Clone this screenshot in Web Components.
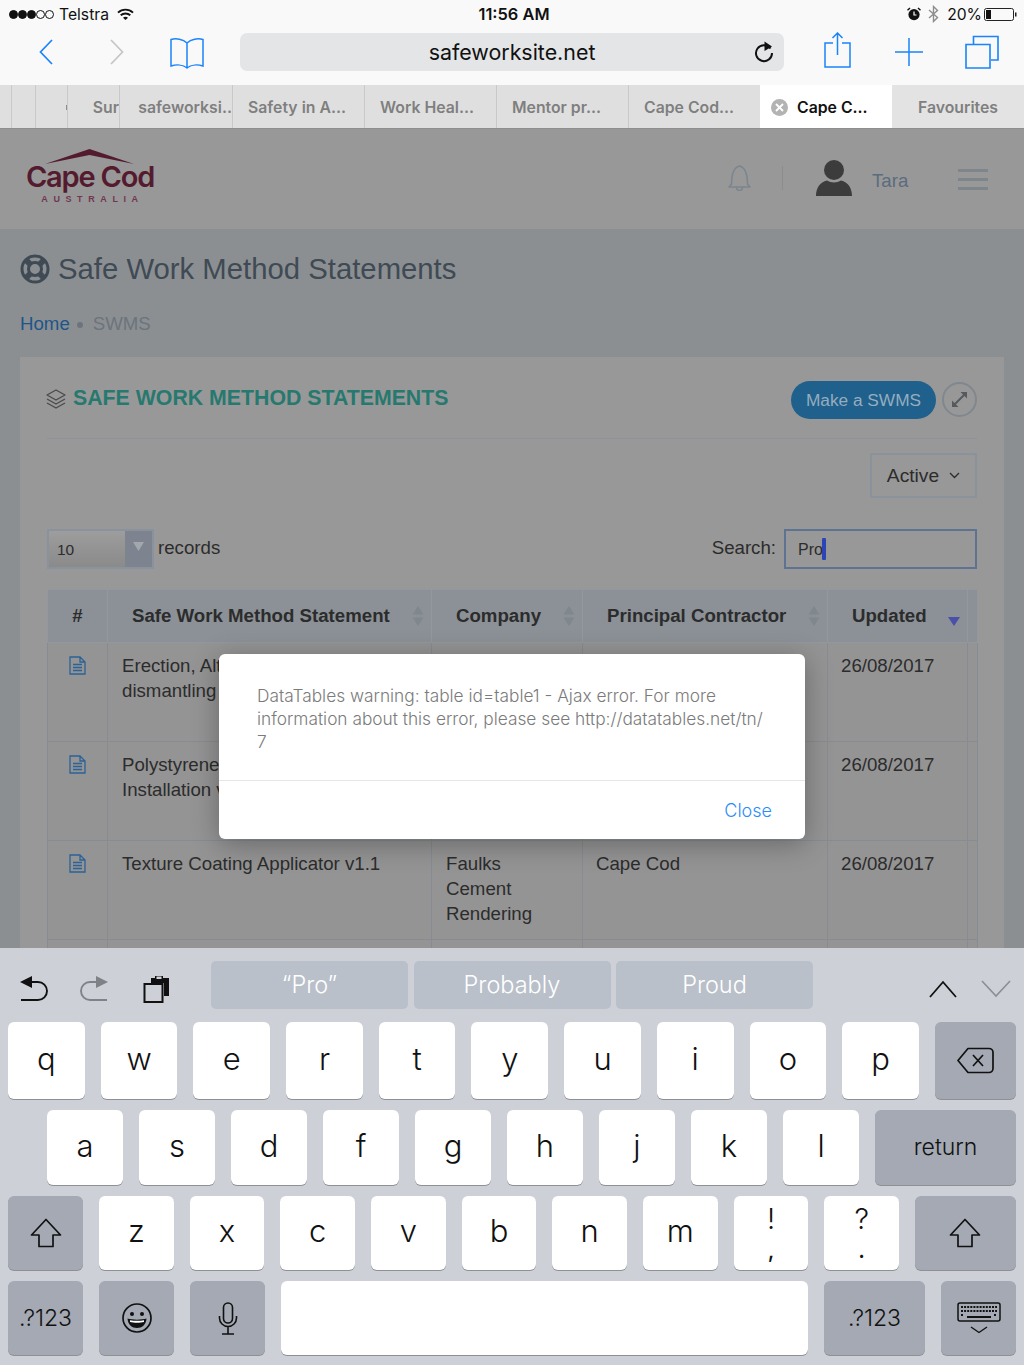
<!DOCTYPE html>
<html lang="en">
<head>
<meta charset="utf-8">
<title>Safe Work Method Statements</title>
<style>
  html, body { margin: 0; height: 100%; }
  body {
    background: #8b8f92;
    display: flex;
    flex-direction: column;
    font-family: "Liberation Sans", Arial, sans-serif;
    height: 1365px;
    overflow: hidden;
    width: 1024px;
  }
</style>
</head>
<body>
  <ios-status></ios-status>
  <browser-bar></browser-bar>
  <tab-strip></tab-strip>
  <web-view>
    <site-header></site-header>
    <page-heading></page-heading>
    <swms-card></swms-card>
    <alert-modal></alert-modal>
  </web-view>
  <ios-keyboard></ios-keyboard>

<script>
const BLUE = '#1a84fb'
const SF = `Inter, "Noto Sans", sans-serif`
const SITE = `"Liberation Sans", Arial, sans-serif`

class IosStatus extends HTMLElement {
  constructor () {
    super()
    this.shadow = this.attachShadow({ mode: 'open' })
  }

  connectedCallback () {
    this.shadow.innerHTML =
    /*html*/`
      <style>
        :host{
          align-items: center;
          background: #f9f9f9;
          color: #111;
          display: grid;
          flex: none;
          font-family: ${SF};
          font-size: 15.700px;
          grid-template-columns: 1fr auto 1fr;
          height: 28px;
          padding: 0 7px 0 9px;
        }
        .left, .right{
          align-items: center;
          display: flex;
        }
        .right{
          justify-content: flex-end;
        }
        .dots{
          display: flex;
          gap: 0;
          margin-right: 5px;
        }
        .dots i{
          border: 1px solid #111;
          border-radius: 50%;
          box-sizing: border-box;
          height: 9px;
          width: 9px;
        }
        .dots i.on{
          background: #111;
        }
        .wifi{
          margin-left: 8px;
        }
        .time{
          font-size: 16.400px;
          font-weight: 600;
          margin-left: 2px;
        }
        .pct{
          margin: 0 2px 0 8px;
        }
      </style>
      <div class="left">
        <div class="dots"><i class="on"></i><i class="on"></i><i class="on"></i><i></i><i></i></div>
        <span>Telstra</span>
        <svg class="wifi" width="17" height="12" viewBox="0 0 17 12"><path d="M1 4.600a11 11 0 0 1 15 0M3.700 7.300a7.200 7.200 0 0 1 9.600 0" fill="none" stroke="#111" stroke-width="1.900"/><path d="M6 9.700a4 4 0 0 1 5 0L8.500 12z" fill="#111"/></svg>
      </div>
      <div class="time">11:56 AM</div>
      <div class="right">
        <svg width="14" height="14" viewBox="0 0 14 14"><circle cx="7" cy="7.600" r="5.600" fill="#111"/><path d="M7 4.500V8H9.500" fill="none" stroke="#fff" stroke-width="1.200"/><path d="M0.500 3.200L3 1M13.500 3.200L11 1" stroke="#111" stroke-width="1.500"/></svg>
        <svg style="margin-left:7px" width="11" height="18" viewBox="0 0 11 18"><path d="M1 5L9.500 12.500L5.500 16.500V1.500L9.500 5.500L1 13" fill="none" stroke="#8d8d8d" stroke-width="1.400"/></svg>
        <span class="pct">20%</span>
        <svg width="33" height="13" viewBox="0 0 33 13"><rect x=".5" y=".5" width="29" height="12" rx="2" fill="none" stroke="#222"/><rect x="2" y="2" width="5" height="9" fill="#111"/><path d="M31 4.500h1.500v4H31z" fill="#222"/></svg>
      </div>
    `
  }
}

class BrowserBar extends HTMLElement {
  constructor () {
    super()
    this.shadow = this.attachShadow({ mode: 'open' })
  }

  connectedCallback () {
    this.shadow.innerHTML =
    /*html*/`
      <style>
        :host{
          align-items: center;
          background: #f9f9f9;
          box-sizing: border-box;
          display: flex;
          flex: none;
          height: 57px;
          padding: 0 26px 9px 39px;
        }
        svg{
          display: block;
          flex: none;
        }
        .url{
          align-items: center;
          background: #e4e5e7;
          border-radius: 7px;
          box-sizing: border-box;
          color: #111;
          display: flex;
          flex: none;
          font-family: ${SF};
          font-size: 21.400px;
          height: 38px;
          justify-content: center;
          margin-left: 36px;
          position: relative;
          width: 544px;
        }
        .url svg{
          position: absolute;
          right: 10px;
          top: 8px;
        }
      </style>
      <svg width="14" height="26" viewBox="0 0 14 26"><path d="M13 1L1.500 13L13 25" fill="none" stroke="${BLUE}" stroke-width="1.700"/></svg>
      <svg style="margin-left:57px" width="14" height="26" viewBox="0 0 14 26"><path d="M1 1L12.500 13L1 25" fill="none" stroke="#c5c5c5" stroke-width="1.700"/></svg>
      <svg style="margin-left:46px;margin-top:1px" width="34" height="33" viewBox="0 0 34 33"><path d="M17 7C13 3 6 2 1 3.500V30C6 28.500 13 28.500 17 32C21 28.500 28 28.500 33 30V3.500C28 2 21 3 17 7ZM17 7V32" fill="none" stroke="${BLUE}" stroke-width="1.500"/></svg>
      <div class="url">
        safeworksite.net
        <svg width="20" height="22" viewBox="0 0 20 22"><path d="M16.500 7.500A8 8 0 1 0 18 12" fill="none" stroke="#111" stroke-width="2"/><path d="M10.500 0.500L18 5.500L10.500 10z" fill="#111"/></svg>
      </div>
      <svg style="margin-left:40px;margin-top:-4px" width="28" height="36" viewBox="0 0 28 36"><path d="M9 11H1V35H26V11H18M13.500 1V23M8.500 6L13.500 1L18.500 6" fill="none" stroke="${BLUE}" stroke-width="1.500"/></svg>
      <svg style="margin-left:43px" width="28" height="28" viewBox="0 0 28 28"><path d="M0 14H28M14 0V28" stroke="${BLUE}" stroke-width="1.500"/></svg>
      <svg style="margin-left:42px;margin-top:-1px" width="34" height="34" viewBox="0 0 34 34"><path d="M1 9.500H25V33H1ZM8.500 9V1.500H33V25H26" fill="none" stroke="${BLUE}" stroke-width="1.600"/></svg>
    `
  }
}

class TabStrip extends HTMLElement {
  constructor () {
    super()
    this.shadow = this.attachShadow({ mode: 'open' })
  }

  connectedCallback () {
    this.shadow.innerHTML =
    /*html*/`
      <style>
        :host{
          background: #dfdfdf;
          border-bottom: 1px solid #8e8e8e;
          box-sizing: border-box;
          color: #7f7f7f;
          display: flex;
          flex: none;
          font-family: ${SF};
          font-size: 15.800px;
          font-weight: 600;
          height: 44px;
        }
        .tab{
          align-items: center;
          border-left: 1px solid #c9c9c9;
          box-sizing: border-box;
          display: flex;
          flex: none;
          overflow: hidden;
          padding: 1px 0 0 15px;
          white-space: nowrap;
          width: 132px;
        }
        .end{
          justify-content: flex-end;
          padding-left: 0;
        }
        .sliver{
          background: #8c8c8c;
          height: 5px;
          margin-top: 1px;
          width: 1.500px;
        }
        .active{
          background: #fff;
          border: 0;
          color: #111;
          gap: 9px;
          padding-left: 11px;
        }
        .fav{
          background: #e3e3e3;
          border: 0;
          justify-content: center;
          padding-left: 0;
        }
      </style>
      <div class="tab end" style="width:11px;border:0"></div>
      <div class="tab end" style="width:24px"></div>
      <div class="tab end" style="width:32px"><div class="sliver"></div></div>
      <div class="tab end" style="width:52px">Sur</div>
      <div class="tab end" style="width:113px">safeworksi..</div>
      <div class="tab">Safety in A...</div>
      <div class="tab">Work Heal...</div>
      <div class="tab">Mentor pr...</div>
      <div class="tab">Cape Cod...</div>
      <div class="tab active">
        <svg width="17" height="17" viewBox="0 0 17 17"><circle cx="8.500" cy="8.500" r="8.500" fill="#b3b3b3"/><path d="M5 5L12 12M12 5L5 12" stroke="#fff" stroke-width="1.800"/></svg>
        Cape C...
      </div>
      <div class="tab fav">Favourites</div>
    `
  }
}

class WebView extends HTMLElement {
  constructor () {
    super()
    this.shadow = this.attachShadow({ mode: 'open' })
  }

  connectedCallback () {
    this.shadow.innerHTML =
    /*html*/`
      <style>
        :host{
          background: #8b8f92;
          display: block;
          flex: none;
          font-family: ${SITE};
          height: 819px;
          overflow: hidden;
          position: relative;
        }
      </style>
      <slot></slot>
    `
  }
}

class SiteHeader extends HTMLElement {
  constructor () {
    super()
    this.shadow = this.attachShadow({ mode: 'open' })
  }

  connectedCallback () {
    this.shadow.innerHTML =
    /*html*/`
      <style>
        :host{
          align-items: center;
          background: #989898;
          box-sizing: border-box;
          display: flex;
          height: 100px;
          padding: 0 36px 0 25px;
        }
        svg{
          display: block;
          flex: none;
        }
        .logo{
          align-items: center;
          color: #541b2e;
          display: flex;
          flex-direction: column;
          margin-top: -6px;
          width: 130px;
        }
        .brand{
          font-family: Inter, sans-serif;
          font-size: 29px;
          font-weight: 600;
          letter-spacing: -1.200px;
          line-height: 27px;
          margin-top: -2px;
          white-space: nowrap;
        }
        .country{
          color: #733651;
          font-size: 9px;
          font-weight: 700;
          letter-spacing: 5.600px;
          line-height: 10px;
          margin-top: 4px;
          padding-left: 5px;
        }
        .user{
          align-items: center;
          display: flex;
          margin-left: auto;
          margin-top: -2px;
        }
        .sep{
          background: #8a8e91;
          height: 24px;
          margin: 0 33px 0 31px;
          width: 1px;
        }
        .name{
          color: #5b6c7e;
          font-size: 18.670px;
          margin: 0 51px 0 20px;
          padding-top: 6px;
          width: 35px;
        }
        .menu{
          display: flex;
          flex-direction: column;
          gap: 6px;
          margin-top: 3px;
        }
        .menu i{
          background: #7e868c;
          height: 3px;
          width: 30px;
        }
      </style>
      <div class="logo">
        <svg width="90" height="17" viewBox="0 0 90 17"><path d="M0 16L44.500 1L89 16L44.500 7z" fill="#541b2e"/></svg>
        <div class="brand">Cape Cod</div>
        <div class="country">AUSTRALIA</div>
      </div>
      <div class="user">
        <svg style="margin-top:-2px" width="23" height="27" viewBox="0 0 23 27"><path d="M3.500 20C3.500 15 4 4 11.500 2C19 4 19.500 15 19.500 20L22 23H1ZM8.500 23.500A3 3 0 0 0 14.500 23.500" fill="none" stroke="#7b858d" stroke-width="1.500" stroke-linejoin="round"/></svg>
        <div class="sep"></div>
        <svg width="36" height="36" viewBox="0 0 36 36"><circle cx="18" cy="10" r="10" fill="#3c3c3c"/><path d="M0 36C0 28 4 22 11 20.500C15 23 21 23 25 20.500C32 22 36 28 36 36Z" fill="#3c3c3c"/></svg>
        <div class="name">Tara</div>
        <div class="menu"><i></i><i></i><i></i></div>
      </div>
    `
  }
}

class PageHeading extends HTMLElement {
  constructor () {
    super()
    this.shadow = this.attachShadow({ mode: 'open' })
  }

  connectedCallback () {
    this.shadow.innerHTML =
    /*html*/`
      <style>
        :host{
          box-sizing: border-box;
          display: block;
          height: 128px;
          padding: 23px 20px 0;
        }
        h1{
          align-items: center;
          color: #3f4a54;
          display: flex;
          font-size: 29.300px;
          font-weight: 400;
          gap: 8px;
          line-height: 34px;
          margin: 0;
        }
        .crumbs{
          align-items: center;
          color: #6c747d;
          display: flex;
          font-size: 18.670px;
          line-height: 24px;
          margin-top: 26px;
        }
        .crumbs a{
          color: #1f5589;
        }
        .crumbs i{
          background: #6c747d;
          border-radius: 50%;
          height: 6px;
          margin: 2px 10px 0 7px;
          width: 6px;
        }
      </style>
      <h1>
        <svg width="30" height="30" viewBox="0 0 30 30"><circle cx="15" cy="15" r="13" fill="none" stroke="#3f4a54" stroke-width="3"/><circle cx="15" cy="15" r="6.500" fill="none" stroke="#3f4a54" stroke-width="3"/><path d="M6 6L10.500 10.500M24 6L19.500 10.500M6 24L10.500 19.500M24 24L19.500 19.500" stroke="#3f4a54" stroke-width="6"/></svg>
        Safe Work Method Statements
      </h1>
      <div class="crumbs"><a>Home</a><i></i><span>SWMS</span></div>
    `
  }
}

class SwmsCard extends HTMLElement {
  constructor () {
    super()
    this.shadow = this.attachShadow({ mode: 'open' })
  }

  connectedCallback () {
    this.shadow.innerHTML =
    /*html*/`
      <style>
        :host{
          background: #989898;
          box-sizing: border-box;
          color: #2c2c2c;
          display: block;
          font-size: 18.670px;
          margin: 0 20px;
          padding: 0 27px;
        }
        .head{
          align-items: center;
          border-bottom: 1px solid #8e9296;
          box-sizing: border-box;
          display: flex;
          height: 82px;
          padding-top: 4px;
        }
        h2{
          align-items: center;
          color: #27796f;
          display: flex;
          font-size: 21.300px;
          font-weight: 700;
          gap: 7px;
          margin: 0 0 0 -1px;
          position: relative;
          top: -1px;
        }
        .make{
          background: #1f608c;
          border-radius: 19px;
          color: #95adbf;
          font-size: 17.300px;
          height: 38px;
          line-height: 38px;
          margin-left: auto;
          text-align: center;
          width: 145px;
        }
        .expand{
          align-items: center;
          border: 2px solid #80878e;
          border-radius: 50%;
          box-sizing: border-box;
          display: flex;
          height: 35px;
          justify-content: center;
          margin-left: 6px;
          width: 35px;
        }
        .status{
          display: flex;
          justify-content: flex-end;
          margin-top: 14px;
        }
        .active{
          align-items: center;
          border: 2px solid #8a929b;
          box-sizing: border-box;
          display: flex;
          font-size: 19.200px;
          gap: 10px;
          height: 45px;
          justify-content: center;
          width: 107px;
        }
        .tools{
          align-items: center;
          display: flex;
          height: 40px;
          margin-top: 31px;
        }
        .tools > span{
          padding-bottom: 2px;
        }
        .select{
          background: linear-gradient(#9d9d9d, #8a8a8a);
          border: 2px solid #8a929e;
          box-sizing: border-box;
          display: flex;
          height: 40px;
          width: 107px;
        }
        .select span{
          align-self: center;
          flex: 1;
          font-size: 15.500px;
          padding: 2px 0 0 8px;
        }
        .select b{
          align-items: center;
          background: #7d838f;
          display: flex;
          justify-content: center;
          padding-bottom: 6px;
          width: 27px;
        }
        .records{
          margin-left: 4px;
        }
        .search{
          margin-left: auto;
        }
        .input{
          border: 2px solid #5e7391;
          box-sizing: border-box;
          font-size: 16px;
          height: 40px;
          line-height: 38px;
          margin-left: 8px;
          padding-left: 12px;
          position: relative;
          width: 193px;
        }
        .input i{
          background: #2b45b6;
          border-radius: 1px;
          height: 22px;
          left: 36px;
          position: absolute;
          top: 7px;
          width: 4px;
        }
        data-table{
          margin-top: 20px;
        }
      </style>
      <div class="head">
        <h2>
          <svg width="20" height="20" viewBox="0 0 20 20"><path d="M10 1L19 6L10 11L1 6ZM1 10L10 15L19 10M1 14L10 19L19 14" fill="none" stroke="#4a4a4a" stroke-width="1.300" stroke-linejoin="round"/></svg>
          SAFE WORK METHOD STATEMENTS
        </h2>
        <div class="make">Make a SWMS</div>
        <div class="expand">
          <svg width="17" height="17" viewBox="0 0 17 17"><path d="M2 15L15 2" stroke="#555a5e" stroke-width="2"/><path d="M9.500 1H16V7.500zM1 9.500V16H7.500z" fill="#555a5e"/></svg>
        </div>
      </div>
      <div class="status">
        <div class="active">
          Active
          <svg width="11" height="7" viewBox="0 0 11 7"><path d="M1 1L5.500 5.500L10 1" fill="none" stroke="#2c2c2c" stroke-width="1.300"/></svg>
        </div>
      </div>
      <div class="tools">
        <div class="select">
          <span>10</span>
          <b><svg width="11" height="9" viewBox="0 0 11 9"><path d="M0 0H11L5.500 9z" fill="#a3a8ae"/></svg></b>
        </div>
        <span class="records">records</span>
        <span class="search">Search:</span>
        <div class="input">Pro<i></i></div>
      </div>
      <data-table></data-table>
    `
  }
}

class DataTable extends HTMLElement {
  constructor () {
    super()
    this.shadow = this.attachShadow({ mode: 'open' })
  }

  fileIcon () {
    return `<svg width="17" height="19" viewBox="0 0 17 19"><path d="M1 1H11L16 6V18H1ZM11 1V6H16M4 8.500H13M4 11.500H13M4 14.500H13" fill="none" stroke="#2b6297" stroke-width="1.300"/></svg>`
  }

  sortIcon (active) {
    if (active) return `<svg class="sort" style="margin-top:10px" width="12" height="9" viewBox="0 0 12 9"><path d="M0 0H12L6 9z" fill="#4a50a8"/></svg>`
    return `<svg class="sort" width="12" height="20" viewBox="0 0 12 20"><path d="M6 0L11.500 8.500H.5zM6 20L11.500 11.500H.5z" fill="#80878d"/></svg>`
  }

  row (statement, company, contractor, updated) {
    return /*html*/`
      <tr>
        <td class="icon">${this.fileIcon()}</td>
        <td>${statement}</td>
        <td>${company}</td>
        <td>${contractor}</td>
        <td>${updated}</td>
        <td></td>
      </tr>
    `
  }

  connectedCallback () {
    this.shadow.innerHTML =
    /*html*/`
      <style>
        :host{
          display: block;
        }
        table{
          border-collapse: collapse;
          color: #2c2c2c;
          font-size: 18.670px;
          table-layout: fixed;
          width: 930px;
        }
        th, td{
          border: 1px solid #868c92;
          box-sizing: border-box;
          overflow: hidden;
          padding: 0;
        }
        th{
          background: #8b9196;
          border-color: #92989e;
          font-weight: 700;
          height: 53px;
          text-align: left;
        }
        th div{
          align-items: center;
          display: flex;
          justify-content: space-between;
          padding: 0 7px 0 24px;
          white-space: nowrap;
        }
        th.num{
          text-align: center;
        }
        td{
          background: #949494;
          height: 99px;
          line-height: 25px;
          padding: 10px 13px 0 14px;
          vertical-align: top;
          white-space: nowrap;
        }
        td:nth-child(n+4){
          padding-left: 13px;
        }
        td.icon{
          padding: 13px 0 0 21px;
        }
        svg{
          display: block;
          flex: none;
        }
      </style>
      <table>
        <colgroup><col style="width:60px"><col style="width:324px"><col style="width:151px"><col style="width:245px"><col style="width:140px"><col style="width:10px"></colgroup>
        <thead>
          <tr>
            <th class="num">#</th>
            <th><div>Safe Work Method Statement ${this.sortIcon()}</div></th>
            <th><div>Company ${this.sortIcon()}</div></th>
            <th><div>Principal Contractor ${this.sortIcon()}</div></th>
            <th><div>Updated ${this.sortIcon(true)}</div></th>
            <th></th>
          </tr>
        </thead>
        <tbody>
          ${this.row('Erection, Alt<br>dismantling', '', '', '26/08/2017')}
          ${this.row('Polystyrene<br>Installation v', '', '', '26/08/2017')}
          ${this.row('Texture Coating Applicator v1.1', 'Faulks<br>Cement<br>Rendering', 'Cape Cod', '26/08/2017')}
          <tr><td></td><td></td><td></td><td></td><td></td><td></td></tr>
        </tbody>
      </table>
    `
  }
}

class AlertModal extends HTMLElement {
  constructor () {
    super()
    this.shadow = this.attachShadow({ mode: 'open' })
  }

  connectedCallback () {
    this.shadow.innerHTML =
    /*html*/`
      <style>
        :host{
          background: #fff;
          border-radius: 6px;
          box-shadow: 0 5px 28px rgba(0, 0, 0, 0.3);
          display: block;
          font-family: ${SF};
          height: 185px;
          left: 219px;
          position: absolute;
          top: 525px;
          width: 586px;
        }
        .body{
          border-bottom: 1px solid #e6e6e6;
          box-sizing: border-box;
          color: #7b7b7b;
          font-size: 17.300px;
          font-weight: 300;
          height: 127px;
          line-height: 23px;
          padding: 30px 0 0 38px;
          white-space: nowrap;
        }
        .foot{
          color: #2a8dfc;
          font-size: 18px;
          font-weight: 300;
          line-height: 60px;
          padding-right: 33px;
          text-align: right;
        }
      </style>
      <div class="body">DataTables warning: table id=table1 - Ajax error. For more<br>information about this error, please see http://datatables.net/tn/<br>7</div>
      <div class="foot">Close</div>
    `
  }
}

class IosKeyboard extends HTMLElement {
  constructor () {
    super()
    this.shadow = this.attachShadow({ mode: 'open' })
  }

  key (label, extra = '') {
    return `<div class="key ${extra}">${label}</div>`
  }

  letters (text) {
    return [...text].map(letter => this.key(letter, 'letter')).join('')
  }

  connectedCallback () {
    const shift = `<svg width="32" height="30" viewBox="0 0 32 30"><path d="M16 1.500L30.500 17H23V28.500H9V17H1.500Z" fill="none" stroke="#111" stroke-width="1.700" stroke-linejoin="round"/></svg>`

    this.shadow.innerHTML =
    /*html*/`
      <style>
        :host{
          background: #cdd0d7;
          box-sizing: border-box;
          display: block;
          flex: none;
          font-family: ${SF};
          height: 417px;
          padding-top: 13px;
        }
        svg{
          display: block;
          flex: none;
        }
        .bar{
          align-items: center;
          display: flex;
          height: 48px;
          padding-left: 19px;
        }
        .pick{
          align-items: center;
          background: #b9c0c9;
          border-radius: 5px;
          box-sizing: border-box;
          color: #fff;
          display: flex;
          font-size: 23.500px;
          font-weight: 300;
          height: 48px;
          justify-content: center;
          margin-right: 5.500px;
          padding-bottom: 2px;
          width: 197px;
        }
        .rows{
          display: flex;
          flex-direction: column;
          gap: 11px;
          margin-top: 13px;
        }
        .row{
          display: grid;
          gap: 16px;
          padding: 0 8px;
        }
        .r1{
          grid-template-columns: repeat(10, 1fr) 81px;
          height: 77px;
        }
        .r2{
          grid-template-columns: repeat(9, 76px) 141px;
          height: 75px;
          padding-left: 47px;
        }
        .r2 .word{
          padding-bottom: 2px;
        }
        .r3{
          grid-template-columns: 75px repeat(9, 1fr) 101px;
          height: 74px;
        }
        .r4{
          grid-template-columns: 75px 75px 75px 1fr 101px 75px;
          height: 74px;
        }
        .key{
          align-items: center;
          background: #fff;
          border-radius: 6px;
          box-shadow: 0 1px 0 #8e9094;
          color: #111;
          display: flex;
          font-size: 31px;
          font-weight: 350;
          justify-content: center;
        }
        .letter{
          padding-bottom: 5px;
        }
        .fn{
          background: #a4a9b3;
        }
        .word{
          font-size: 23px;
          font-weight: 300;
        }
        .punct{
          flex-direction: column;
          gap: 4px;
        }
        .punct span{
          font-size: 29px;
          line-height: 30px;
        }
        .punct span + span{
          font-size: 22px;
          font-weight: 500;
          line-height: 24px;
        }
      </style>
      <div class="bar">
        <svg style="margin-top:8px" width="29" height="26" viewBox="0 0 29 26"><path d="M1 6L13 0V12Z" fill="#111"/><path d="M12 6H19A9 9 0 0 1 19 24H2" fill="none" stroke="#111" stroke-width="1.900"/></svg>
        <svg style="margin-left:32px;margin-top:8px" width="29" height="26" viewBox="0 0 29 26"><g transform="translate(29 0) scale(-1 1)"><path d="M1 6L13 0V12Z" fill="#7f8287"/><path d="M12 6H19A9 9 0 0 1 19 24H2" fill="none" stroke="#7f8287" stroke-width="1.900"/></g></svg>
        <svg style="margin-left:34px;margin-right:40px;margin-top:8px" width="28" height="28" viewBox="0 0 28 28"><path d="M8 3H12V1H20V3H26V21H21V8H8Z" fill="#111"/><rect x="13.500" y="1.500" width="5" height="2.500" fill="#cdd0d7"/><rect x="1.500" y="9" width="18" height="18" fill="none" stroke="#111" stroke-width="2"/></svg>
        <div class="pick">“Pro”</div>
        <div class="pick">Probably</div>
        <div class="pick">Proud</div>
        <svg style="margin-left:109px;margin-top:8px" width="30" height="18" viewBox="0 0 30 18"><path d="M2 17L15 2L28 17" fill="none" stroke="#111" stroke-width="1.800"/></svg>
        <svg style="margin-left:23px;margin-top:8px" width="30" height="18" viewBox="0 0 30 18"><path d="M1 1L15 16L29 1" fill="none" stroke="#8b8e94" stroke-width="1.600"/></svg>
      </div>
      <div class="rows">
        <div class="row r1">
          ${this.letters('qwertyuiop')}
          ${this.key(`<svg width="37" height="27" viewBox="0 0 37 27"><path d="M11 1.500H32A4 4 0 0 1 36 5.500V21.500A4 4 0 0 1 32 25.500H11L1 13.500Z" fill="none" stroke="#111" stroke-width="1.700" stroke-linejoin="round"/><path d="M16 8L26 19M26 8L16 19" stroke="#111" stroke-width="1.700"/></svg>`, 'fn')}
        </div>
        <div class="row r2">
          ${this.letters('asdfghjkl')}
          ${this.key('return', 'fn word')}
        </div>
        <div class="row r3">
          ${this.key(shift, 'fn')}
          ${this.letters('zxcvbnm')}
          ${this.key('<span>!</span><span>,</span>', 'punct')}
          ${this.key('<span>?</span><span>.</span>', 'punct')}
          ${this.key(shift, 'fn')}
        </div>
        <div class="row r4">
          ${this.key('.?123', 'fn word')}
          ${this.key(`<svg width="30" height="30" viewBox="0 0 30 30"><circle cx="15" cy="15" r="14" fill="none" stroke="#111" stroke-width="1.700"/><circle cx="10" cy="11" r="2" fill="#111"/><circle cx="20" cy="11" r="2" fill="#111"/><path d="M5.500 15.500C10 17 20 17 24.500 15.500C24 22 20 25 15 25C10 25 6 22 5.500 15.500Z" fill="#111"/><path d="M8 17.200C12 18 18 18 22 17.200V19C18 20 12 20 8 19Z" fill="#fff"/></svg>`, 'fn')}
          ${this.key(`<svg width="20" height="33" viewBox="0 0 20 33"><rect x="5.500" y="1" width="9" height="20" rx="4.500" fill="none" stroke="#111" stroke-width="1.600"/><path d="M1.500 14V16A8.500 8.500 0 0 0 18.500 16V14M10 24.500V31.500M4 32H16" fill="none" stroke="#111" stroke-width="1.600"/></svg>`, 'fn')}
          ${this.key('')}
          ${this.key('.?123', 'fn word')}
          ${this.key(`<svg width="44" height="32" viewBox="0 0 44 32"><rect x="1" y="1" width="42" height="18" rx="2" fill="none" stroke="#111" stroke-width="1.500"/><path d="M4 5H40M4 9H40M4 13H7M37 13H40" stroke="#111" stroke-width="2" stroke-dasharray="2 1.100"/><path d="M10 15H34" stroke="#111" stroke-width="2"/><path d="M14 25L22 30.500L30 25" fill="none" stroke="#111" stroke-width="1.400"/></svg>`, 'fn')}
        </div>
      </div>
    `
  }
}

customElements.define('ios-status', IosStatus)
customElements.define('browser-bar', BrowserBar)
customElements.define('tab-strip', TabStrip)
customElements.define('web-view', WebView)
customElements.define('site-header', SiteHeader)
customElements.define('page-heading', PageHeading)
customElements.define('swms-card', SwmsCard)
customElements.define('data-table', DataTable)
customElements.define('alert-modal', AlertModal)
customElements.define('ios-keyboard', IosKeyboard)
</script>
</body>
</html>
